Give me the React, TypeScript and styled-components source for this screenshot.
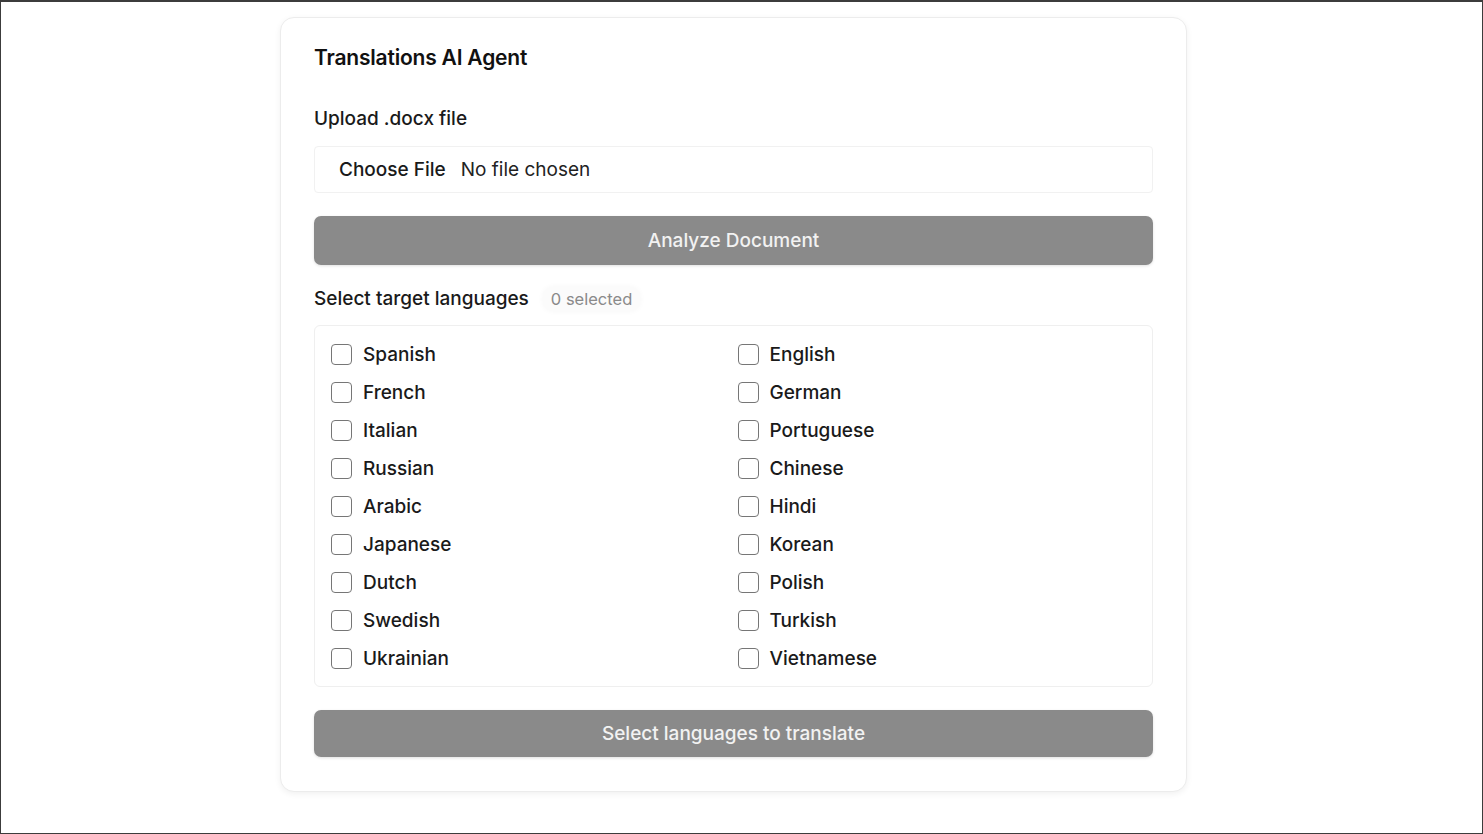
import React from 'react';
import styled, { createGlobalStyle } from "styled-components";

const GlobalStyle = createGlobalStyle`
  html, body {
    margin: 0;
    padding: 0;
    background: #ffffff;
  }
  * {
    box-sizing: border-box;
  }
`;

const Frame = styled.div`
  display: flex;
  justify-content: center;
  align-items: flex-start;

  width: 100vw;
  height: 100vh;
  padding: 15px 16px 0 0;

  border: 1px solid #3c3c3c;
  border-top-width: 2px;
  font-family: Inter, "Noto Sans", sans-serif;
  color: #111111;
`;

const Card = styled.div`
  display: flex;
  flex-direction: column;

  width: 907px;
  padding: 26px 33px 34px;

  background: #ffffff;
  border: 1px solid #ececec;
  border-radius: 14px;
  box-shadow: 0 2px 6px rgba(0, 0, 0, 0.06);
`;

const Title = styled.h1`
  margin: 0;
  font-size: 21px;
  line-height: 28px;
  font-weight: 600;
  letter-spacing: -0.2px;
`;

const Label = styled.div`
  font-size: 19px;
  line-height: 26px;
  font-weight: 500;
  color: #1a1a1a;
`;

const UploadLabel = styled(Label)`
  margin-top: 34px;
`;

const FileBox = styled.div`
  display: flex;
  align-items: center;
  gap: 15px;

  height: 47px;
  margin-top: 14px;
  padding-left: 24px;

  border: 1px solid #f1f1f1;
  border-radius: 4px;
  font-size: 19px;
`;

const ChooseButton = styled.span`
  font-weight: 500;
  color: #1a1a1a;
`;

const FileName = styled.span`
  color: #222222;
`;

const Action = styled.button<{ $height: number; $top: number }>`
  display: flex;
  justify-content: center;
  align-items: center;

  width: 100%;
  height: ${p => p.$height}px;
  margin-top: ${p => p.$top}px;

  background: #8a8a8a;
  border: none;
  border-radius: 7px;
  box-shadow: 0 1px 3px rgba(0, 0, 0, 0.12);

  color: #f2f2f2;
  font-family: Inter, "Noto Sans", sans-serif;
  font-size: 19px;
  font-weight: 500;
  cursor: not-allowed;
`;

const SelectRow = styled.div`
  display: flex;
  align-items: center;
  margin-top: 21px;
`;

const Count = styled.span`
  margin-left: 14px;
  padding: 1px 8px;

  background: #fbfbfb;
  border-radius: 10px;
  box-shadow: 0 0 6px rgba(0, 0, 0, 0.04);

  font-size: 16.5px;
  line-height: 22px;
  color: #8a8a8a;
`;

const LanguageBox = styled.div`
  display: grid;
  grid-template-columns: 1fr 1fr;
  column-gap: 8px;

  margin-top: 13px;
  padding: 9px 16px;

  border: 1px solid #efefef;
  border-radius: 6px;
`;

const Option = styled.label`
  display: flex;
  align-items: center;
  gap: 11px;

  height: 38px;
  font-size: 19px;
  font-weight: 500;
  color: #1a1a1a;
  cursor: pointer;
`;

const Box = styled.span`
  width: 21px;
  height: 21px;

  border: 1.5px solid #767676;
  border-radius: 4px;
  background: #ffffff;
`;

const left = ["Spanish", "French", "Italian", "Russian", "Arabic", "Japanese", "Dutch", "Swedish", "Ukrainian"];
const right = ["English", "German", "Portuguese", "Chinese", "Hindi", "Korean", "Polish", "Turkish", "Vietnamese"];

function App() {
  const ordered: string[] = [];
  left.forEach((l, i) => {
    ordered.push(l, right[i]);
  });

  return (
    <Frame>
      <GlobalStyle />
      <Card>
        <Title>Translations AI Agent</Title>

        <UploadLabel>Upload .docx file</UploadLabel>
        <FileBox>
          <ChooseButton>Choose File</ChooseButton>
          <FileName>No file chosen</FileName>
        </FileBox>

        <Action $height={49} $top={23}>Analyze Document</Action>

        <SelectRow>
          <Label>Select target languages</Label>
          <Count>0 selected</Count>
        </SelectRow>

        <LanguageBox>
          {ordered.map(lang => (
            <Option key={lang}>
              <Box />
              {lang}
            </Option>
          ))}
        </LanguageBox>

        <Action $height={47} $top={23}>Select languages to translate</Action>
      </Card>
    </Frame>
  );
}

export default App;
